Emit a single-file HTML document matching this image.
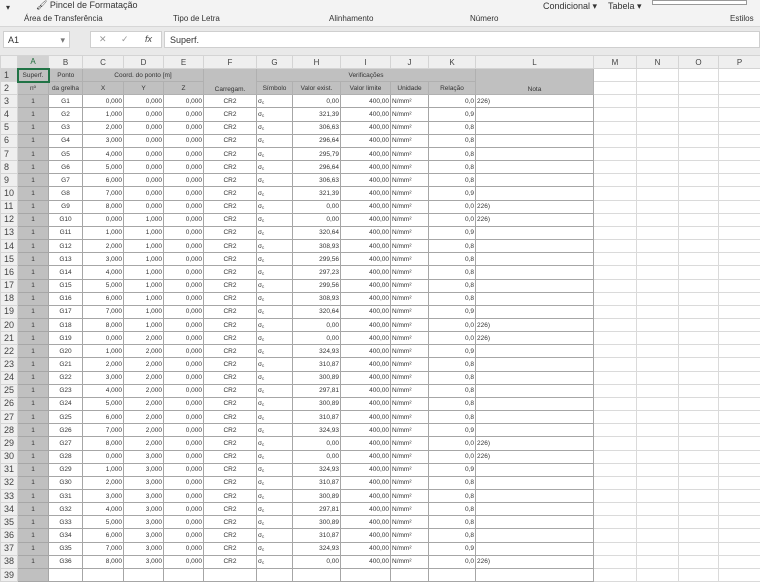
<!DOCTYPE html>
<html><head><meta charset="utf-8"><style>
*{margin:0;padding:0;box-sizing:border-box}
body{width:760px;height:570px;overflow:hidden;background:#fff;font-family:"Liberation Sans",sans-serif;position:relative}
#rib{position:absolute;left:0;top:0;width:760px;height:27px;background:#f3f3f3;border-bottom:1px solid #d6d6d6}
#rib span{position:absolute;font-size:8px;color:#333;white-space:nowrap}
#band{position:absolute;left:0;top:27px;width:760px;height:28px;background:#e9e9e9}
#nb{position:absolute;left:3px;top:31px;width:67px;height:17px;background:#fff;border:1px solid #cfcfcf;font-size:9px;color:#333;padding:3px 4px}
#fx{position:absolute;left:90px;top:31px;width:72px;height:17px;background:#fff;border:1px solid #cfcfcf;font-size:9px;color:#999}
#fb{position:absolute;left:164px;top:31px;width:596px;height:17px;background:#fff;border:1px solid #cfcfcf;font-size:9px;color:#333;padding:3px 5px}
table{position:absolute;left:0;top:55px;border-collapse:collapse;table-layout:fixed;width:760px}
tr{height:13.17px}
td{font-size:6.5px;color:#333;border:1px solid #a6a6a6;height:13.17px;padding:0 1px;white-space:nowrap;overflow:hidden;line-height:9px;vertical-align:middle}
td i{font-style:normal;font-size:4.5px;position:relative;top:1px}
tr.h{height:13px}
tr.h td{background:#efefef;border:1px solid #d4d4d4;color:#444;font-size:8px;text-align:center;height:13px}
td.r{background:#efefef;border:1px solid #d4d4d4;font-size:9px;color:#444;text-align:left;padding-left:3px}
td.a{background:#c0c0c0;text-align:center}
td.c{text-align:center}td.n{text-align:right}
td.e{border:1px solid #dadada}
td.hd{background:#c0c0c0;text-align:center;border-color:#b0b0b0}
</style></head><body>
<div id="rib">
<span style="left:6px;top:3px">▾</span>
<span style="left:36px;top:0px;font-size:9px">🖌 Pincel de Formatação</span>
<span style="left:24px;top:14px">Área de Transferência</span>
<span style="left:173px;top:14px">Tipo de Letra</span>
<span style="left:329px;top:14px">Alinhamento</span>
<span style="left:470px;top:14px">Número</span>
<span style="left:730px;top:14px">Estilos</span>
<span style="left:543px;top:1px;font-size:9px">Condicional ▾</span>
<span style="left:608px;top:1px;font-size:9px">Tabela ▾</span>
<div style="position:absolute;left:652px;top:0;width:95px;height:5px;border:1px solid #999;background:#fff"></div>
</div>
<div id="band"></div>
<div id="nb">A1<span style="float:right;color:#777">▾</span></div>
<div id="fx"><span style="position:absolute;left:8px;top:2px">✕</span><span style="position:absolute;left:30px;top:2px">✓</span><span style="position:absolute;left:54px;top:2px;font-style:italic;color:#444">fx</span></div>
<div id="fb">Superf.</div>
<table>
<colgroup><col style="width:17px"><col style="width:31px"><col style="width:34px"><col style="width:41px"><col style="width:40px"><col style="width:40px"><col style="width:53px"><col style="width:36px"><col style="width:48px"><col style="width:50px"><col style="width:38px"><col style="width:47px"><col style="width:118px"><col style="width:43px"><col style="width:42px"><col style="width:40px"><col style="width:42px"></colgroup>
<tr class="h"><td></td><td style="background:#d2d2d2;color:#1e6b3a">A</td><td>B</td><td>C</td><td>D</td><td>E</td><td>F</td><td>G</td><td>H</td><td>I</td><td>J</td><td>K</td><td>L</td><td>M</td><td>N</td><td>O</td><td>P</td></tr>
<tr><td class="r" style="background:#d2d2d2">1</td><td class="hd" style="border:2px solid #217346;background:#c0c0c0">Superf.</td><td class="hd">Ponto</td><td class="hd" colspan="3">Coord. do ponto [m]</td><td class="hd" rowspan="2" style="vertical-align:bottom">Carregam.</td><td class="hd" colspan="5">Verificações</td><td class="hd" rowspan="2" style="vertical-align:bottom">Nota</td><td class="e"></td><td class="e"></td><td class="e"></td><td class="e"></td></tr>
<tr><td class="r">2</td><td class="hd">nº</td><td class="hd">da grelha</td><td class="hd">X</td><td class="hd">Y</td><td class="hd">Z</td><td class="hd">Símbolo</td><td class="hd">Valor exist.</td><td class="hd">Valor limite</td><td class="hd">Unidade</td><td class="hd">Relação</td><td class="e"></td><td class="e"></td><td class="e"></td><td class="e"></td></tr>
<tr><td class="r">3</td><td class="a">1</td><td class="c">G1</td><td class="n">0,000</td><td class="n">0,000</td><td class="n">0,000</td><td class="c">CR2</td><td>σ<i>c</i></td><td class="n">0,00</td><td class="n">400,00</td><td>N/mm²</td><td class="n">0,0</td><td>226)</td><td class="e"></td><td class="e"></td><td class="e"></td><td class="e"></td></tr>
<tr><td class="r">4</td><td class="a">1</td><td class="c">G2</td><td class="n">1,000</td><td class="n">0,000</td><td class="n">0,000</td><td class="c">CR2</td><td>σ<i>c</i></td><td class="n">321,39</td><td class="n">400,00</td><td>N/mm²</td><td class="n">0,9</td><td></td><td class="e"></td><td class="e"></td><td class="e"></td><td class="e"></td></tr>
<tr><td class="r">5</td><td class="a">1</td><td class="c">G3</td><td class="n">2,000</td><td class="n">0,000</td><td class="n">0,000</td><td class="c">CR2</td><td>σ<i>c</i></td><td class="n">306,63</td><td class="n">400,00</td><td>N/mm²</td><td class="n">0,8</td><td></td><td class="e"></td><td class="e"></td><td class="e"></td><td class="e"></td></tr>
<tr><td class="r">6</td><td class="a">1</td><td class="c">G4</td><td class="n">3,000</td><td class="n">0,000</td><td class="n">0,000</td><td class="c">CR2</td><td>σ<i>c</i></td><td class="n">296,64</td><td class="n">400,00</td><td>N/mm²</td><td class="n">0,8</td><td></td><td class="e"></td><td class="e"></td><td class="e"></td><td class="e"></td></tr>
<tr><td class="r">7</td><td class="a">1</td><td class="c">G5</td><td class="n">4,000</td><td class="n">0,000</td><td class="n">0,000</td><td class="c">CR2</td><td>σ<i>c</i></td><td class="n">295,79</td><td class="n">400,00</td><td>N/mm²</td><td class="n">0,8</td><td></td><td class="e"></td><td class="e"></td><td class="e"></td><td class="e"></td></tr>
<tr><td class="r">8</td><td class="a">1</td><td class="c">G6</td><td class="n">5,000</td><td class="n">0,000</td><td class="n">0,000</td><td class="c">CR2</td><td>σ<i>c</i></td><td class="n">296,64</td><td class="n">400,00</td><td>N/mm²</td><td class="n">0,8</td><td></td><td class="e"></td><td class="e"></td><td class="e"></td><td class="e"></td></tr>
<tr><td class="r">9</td><td class="a">1</td><td class="c">G7</td><td class="n">6,000</td><td class="n">0,000</td><td class="n">0,000</td><td class="c">CR2</td><td>σ<i>c</i></td><td class="n">306,63</td><td class="n">400,00</td><td>N/mm²</td><td class="n">0,8</td><td></td><td class="e"></td><td class="e"></td><td class="e"></td><td class="e"></td></tr>
<tr><td class="r">10</td><td class="a">1</td><td class="c">G8</td><td class="n">7,000</td><td class="n">0,000</td><td class="n">0,000</td><td class="c">CR2</td><td>σ<i>c</i></td><td class="n">321,39</td><td class="n">400,00</td><td>N/mm²</td><td class="n">0,9</td><td></td><td class="e"></td><td class="e"></td><td class="e"></td><td class="e"></td></tr>
<tr><td class="r">11</td><td class="a">1</td><td class="c">G9</td><td class="n">8,000</td><td class="n">0,000</td><td class="n">0,000</td><td class="c">CR2</td><td>σ<i>c</i></td><td class="n">0,00</td><td class="n">400,00</td><td>N/mm²</td><td class="n">0,0</td><td>226)</td><td class="e"></td><td class="e"></td><td class="e"></td><td class="e"></td></tr>
<tr><td class="r">12</td><td class="a">1</td><td class="c">G10</td><td class="n">0,000</td><td class="n">1,000</td><td class="n">0,000</td><td class="c">CR2</td><td>σ<i>c</i></td><td class="n">0,00</td><td class="n">400,00</td><td>N/mm²</td><td class="n">0,0</td><td>226)</td><td class="e"></td><td class="e"></td><td class="e"></td><td class="e"></td></tr>
<tr><td class="r">13</td><td class="a">1</td><td class="c">G11</td><td class="n">1,000</td><td class="n">1,000</td><td class="n">0,000</td><td class="c">CR2</td><td>σ<i>c</i></td><td class="n">320,64</td><td class="n">400,00</td><td>N/mm²</td><td class="n">0,9</td><td></td><td class="e"></td><td class="e"></td><td class="e"></td><td class="e"></td></tr>
<tr><td class="r">14</td><td class="a">1</td><td class="c">G12</td><td class="n">2,000</td><td class="n">1,000</td><td class="n">0,000</td><td class="c">CR2</td><td>σ<i>c</i></td><td class="n">308,93</td><td class="n">400,00</td><td>N/mm²</td><td class="n">0,8</td><td></td><td class="e"></td><td class="e"></td><td class="e"></td><td class="e"></td></tr>
<tr><td class="r">15</td><td class="a">1</td><td class="c">G13</td><td class="n">3,000</td><td class="n">1,000</td><td class="n">0,000</td><td class="c">CR2</td><td>σ<i>c</i></td><td class="n">299,56</td><td class="n">400,00</td><td>N/mm²</td><td class="n">0,8</td><td></td><td class="e"></td><td class="e"></td><td class="e"></td><td class="e"></td></tr>
<tr><td class="r">16</td><td class="a">1</td><td class="c">G14</td><td class="n">4,000</td><td class="n">1,000</td><td class="n">0,000</td><td class="c">CR2</td><td>σ<i>c</i></td><td class="n">297,23</td><td class="n">400,00</td><td>N/mm²</td><td class="n">0,8</td><td></td><td class="e"></td><td class="e"></td><td class="e"></td><td class="e"></td></tr>
<tr><td class="r">17</td><td class="a">1</td><td class="c">G15</td><td class="n">5,000</td><td class="n">1,000</td><td class="n">0,000</td><td class="c">CR2</td><td>σ<i>c</i></td><td class="n">299,56</td><td class="n">400,00</td><td>N/mm²</td><td class="n">0,8</td><td></td><td class="e"></td><td class="e"></td><td class="e"></td><td class="e"></td></tr>
<tr><td class="r">18</td><td class="a">1</td><td class="c">G16</td><td class="n">6,000</td><td class="n">1,000</td><td class="n">0,000</td><td class="c">CR2</td><td>σ<i>c</i></td><td class="n">308,93</td><td class="n">400,00</td><td>N/mm²</td><td class="n">0,8</td><td></td><td class="e"></td><td class="e"></td><td class="e"></td><td class="e"></td></tr>
<tr><td class="r">19</td><td class="a">1</td><td class="c">G17</td><td class="n">7,000</td><td class="n">1,000</td><td class="n">0,000</td><td class="c">CR2</td><td>σ<i>c</i></td><td class="n">320,64</td><td class="n">400,00</td><td>N/mm²</td><td class="n">0,9</td><td></td><td class="e"></td><td class="e"></td><td class="e"></td><td class="e"></td></tr>
<tr><td class="r">20</td><td class="a">1</td><td class="c">G18</td><td class="n">8,000</td><td class="n">1,000</td><td class="n">0,000</td><td class="c">CR2</td><td>σ<i>c</i></td><td class="n">0,00</td><td class="n">400,00</td><td>N/mm²</td><td class="n">0,0</td><td>226)</td><td class="e"></td><td class="e"></td><td class="e"></td><td class="e"></td></tr>
<tr><td class="r">21</td><td class="a">1</td><td class="c">G19</td><td class="n">0,000</td><td class="n">2,000</td><td class="n">0,000</td><td class="c">CR2</td><td>σ<i>c</i></td><td class="n">0,00</td><td class="n">400,00</td><td>N/mm²</td><td class="n">0,0</td><td>226)</td><td class="e"></td><td class="e"></td><td class="e"></td><td class="e"></td></tr>
<tr><td class="r">22</td><td class="a">1</td><td class="c">G20</td><td class="n">1,000</td><td class="n">2,000</td><td class="n">0,000</td><td class="c">CR2</td><td>σ<i>c</i></td><td class="n">324,93</td><td class="n">400,00</td><td>N/mm²</td><td class="n">0,9</td><td></td><td class="e"></td><td class="e"></td><td class="e"></td><td class="e"></td></tr>
<tr><td class="r">23</td><td class="a">1</td><td class="c">G21</td><td class="n">2,000</td><td class="n">2,000</td><td class="n">0,000</td><td class="c">CR2</td><td>σ<i>c</i></td><td class="n">310,87</td><td class="n">400,00</td><td>N/mm²</td><td class="n">0,8</td><td></td><td class="e"></td><td class="e"></td><td class="e"></td><td class="e"></td></tr>
<tr><td class="r">24</td><td class="a">1</td><td class="c">G22</td><td class="n">3,000</td><td class="n">2,000</td><td class="n">0,000</td><td class="c">CR2</td><td>σ<i>c</i></td><td class="n">300,89</td><td class="n">400,00</td><td>N/mm²</td><td class="n">0,8</td><td></td><td class="e"></td><td class="e"></td><td class="e"></td><td class="e"></td></tr>
<tr><td class="r">25</td><td class="a">1</td><td class="c">G23</td><td class="n">4,000</td><td class="n">2,000</td><td class="n">0,000</td><td class="c">CR2</td><td>σ<i>c</i></td><td class="n">297,81</td><td class="n">400,00</td><td>N/mm²</td><td class="n">0,8</td><td></td><td class="e"></td><td class="e"></td><td class="e"></td><td class="e"></td></tr>
<tr><td class="r">26</td><td class="a">1</td><td class="c">G24</td><td class="n">5,000</td><td class="n">2,000</td><td class="n">0,000</td><td class="c">CR2</td><td>σ<i>c</i></td><td class="n">300,89</td><td class="n">400,00</td><td>N/mm²</td><td class="n">0,8</td><td></td><td class="e"></td><td class="e"></td><td class="e"></td><td class="e"></td></tr>
<tr><td class="r">27</td><td class="a">1</td><td class="c">G25</td><td class="n">6,000</td><td class="n">2,000</td><td class="n">0,000</td><td class="c">CR2</td><td>σ<i>c</i></td><td class="n">310,87</td><td class="n">400,00</td><td>N/mm²</td><td class="n">0,8</td><td></td><td class="e"></td><td class="e"></td><td class="e"></td><td class="e"></td></tr>
<tr><td class="r">28</td><td class="a">1</td><td class="c">G26</td><td class="n">7,000</td><td class="n">2,000</td><td class="n">0,000</td><td class="c">CR2</td><td>σ<i>c</i></td><td class="n">324,93</td><td class="n">400,00</td><td>N/mm²</td><td class="n">0,9</td><td></td><td class="e"></td><td class="e"></td><td class="e"></td><td class="e"></td></tr>
<tr><td class="r">29</td><td class="a">1</td><td class="c">G27</td><td class="n">8,000</td><td class="n">2,000</td><td class="n">0,000</td><td class="c">CR2</td><td>σ<i>c</i></td><td class="n">0,00</td><td class="n">400,00</td><td>N/mm²</td><td class="n">0,0</td><td>226)</td><td class="e"></td><td class="e"></td><td class="e"></td><td class="e"></td></tr>
<tr><td class="r">30</td><td class="a">1</td><td class="c">G28</td><td class="n">0,000</td><td class="n">3,000</td><td class="n">0,000</td><td class="c">CR2</td><td>σ<i>c</i></td><td class="n">0,00</td><td class="n">400,00</td><td>N/mm²</td><td class="n">0,0</td><td>226)</td><td class="e"></td><td class="e"></td><td class="e"></td><td class="e"></td></tr>
<tr><td class="r">31</td><td class="a">1</td><td class="c">G29</td><td class="n">1,000</td><td class="n">3,000</td><td class="n">0,000</td><td class="c">CR2</td><td>σ<i>c</i></td><td class="n">324,93</td><td class="n">400,00</td><td>N/mm²</td><td class="n">0,9</td><td></td><td class="e"></td><td class="e"></td><td class="e"></td><td class="e"></td></tr>
<tr><td class="r">32</td><td class="a">1</td><td class="c">G30</td><td class="n">2,000</td><td class="n">3,000</td><td class="n">0,000</td><td class="c">CR2</td><td>σ<i>c</i></td><td class="n">310,87</td><td class="n">400,00</td><td>N/mm²</td><td class="n">0,8</td><td></td><td class="e"></td><td class="e"></td><td class="e"></td><td class="e"></td></tr>
<tr><td class="r">33</td><td class="a">1</td><td class="c">G31</td><td class="n">3,000</td><td class="n">3,000</td><td class="n">0,000</td><td class="c">CR2</td><td>σ<i>c</i></td><td class="n">300,89</td><td class="n">400,00</td><td>N/mm²</td><td class="n">0,8</td><td></td><td class="e"></td><td class="e"></td><td class="e"></td><td class="e"></td></tr>
<tr><td class="r">34</td><td class="a">1</td><td class="c">G32</td><td class="n">4,000</td><td class="n">3,000</td><td class="n">0,000</td><td class="c">CR2</td><td>σ<i>c</i></td><td class="n">297,81</td><td class="n">400,00</td><td>N/mm²</td><td class="n">0,8</td><td></td><td class="e"></td><td class="e"></td><td class="e"></td><td class="e"></td></tr>
<tr><td class="r">35</td><td class="a">1</td><td class="c">G33</td><td class="n">5,000</td><td class="n">3,000</td><td class="n">0,000</td><td class="c">CR2</td><td>σ<i>c</i></td><td class="n">300,89</td><td class="n">400,00</td><td>N/mm²</td><td class="n">0,8</td><td></td><td class="e"></td><td class="e"></td><td class="e"></td><td class="e"></td></tr>
<tr><td class="r">36</td><td class="a">1</td><td class="c">G34</td><td class="n">6,000</td><td class="n">3,000</td><td class="n">0,000</td><td class="c">CR2</td><td>σ<i>c</i></td><td class="n">310,87</td><td class="n">400,00</td><td>N/mm²</td><td class="n">0,8</td><td></td><td class="e"></td><td class="e"></td><td class="e"></td><td class="e"></td></tr>
<tr><td class="r">37</td><td class="a">1</td><td class="c">G35</td><td class="n">7,000</td><td class="n">3,000</td><td class="n">0,000</td><td class="c">CR2</td><td>σ<i>c</i></td><td class="n">324,93</td><td class="n">400,00</td><td>N/mm²</td><td class="n">0,9</td><td></td><td class="e"></td><td class="e"></td><td class="e"></td><td class="e"></td></tr>
<tr><td class="r">38</td><td class="a">1</td><td class="c">G36</td><td class="n">8,000</td><td class="n">3,000</td><td class="n">0,000</td><td class="c">CR2</td><td>σ<i>c</i></td><td class="n">0,00</td><td class="n">400,00</td><td>N/mm²</td><td class="n">0,0</td><td>226)</td><td class="e"></td><td class="e"></td><td class="e"></td><td class="e"></td></tr>
<tr><td class="r">39</td><td class="a"></td><td></td><td></td><td></td><td></td><td></td><td></td><td></td><td></td><td></td><td></td><td></td><td class="e"></td><td class="e"></td><td class="e"></td><td class="e"></td></tr>
</table>
</body></html>
